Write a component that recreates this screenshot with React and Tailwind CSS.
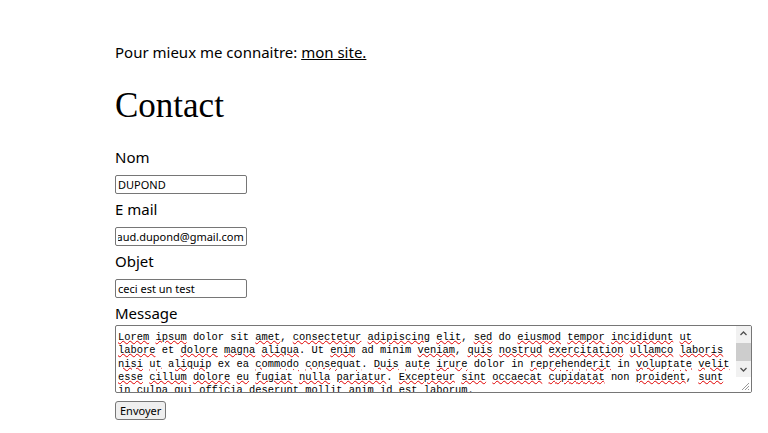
import { useEffect, useRef } from 'react';

const lorem =
  "Lorem ipsum dolor sit amet, consectetur adipiscing elit, sed do eiusmod tempor incididunt ut labore et dolore magna aliqua. Ut enim ad minim veniam, quis nostrud exercitation ullamco laboris nisi ut aliquip ex ea commodo consequat. Duis aute irure dolor in reprehenderit in voluptate velit esse cillum dolore eu fugiat nulla pariatur. Excepteur sint occaecat cupidatat non proident, sunt in culpa qui officia deserunt mollit anim id est laborum.";

// mots soulignés par le correcteur orthographique
const fautes = new Set(
  "Lorem ipsum amet consectetur adipiscing elit sed eiusmod tempor incididunt ut labore dolore magna aliqua enim veniam quis nostrud exercitation ullamco laboris nisi aliquip commodo consequat Duis aute irure reprehenderit voluptate velit esse cillum eu fugiat nulla pariatur Excepteur sint occaecat cupidatat proident sunt culpa qui officia deserunt mollit anim laborum".split(" ")
);

const inputCls =
  "block w-[132px] h-[19px] border border-[#767676] rounded-[2px] px-[2px] text-[11px] text-black bg-white outline-none";

const labelCls = "block text-[15px] leading-[22px] mt-[4px] mb-[7px]";

const Message = () => {
  const words = lorem.split(" ");
  return (
    <div className="flex w-[637px] h-[68px] border border-[#767676] rounded-[2px] bg-white overflow-hidden">
      <div
        role="textbox"
        aria-multiline="true"
        contentEditable
        suppressContentEditableWarning
        className="flex-1 pl-[2px] pr-[4px] pt-[5px] text-[10.4px] leading-[13.25px] font-['Liberation_Mono',monospace] text-black outline-none overflow-hidden whitespace-pre-wrap"
      >
        {words.map((w, i) => {
          const clean = w.replace(/[.,]/g, '');
          const punct = w.slice(clean.length);
          return (
            <span key={i}>
              {fautes.has(clean) ? (
                <span className="underline decoration-wavy decoration-[#e00000] decoration-1 underline-offset-[0px]">{clean}</span>
              ) : clean}
              {punct}
              {i < words.length - 1 ? ' ' : ''}
            </span>
          );
        })}
      </div>

      {/* barre de défilement */}
      <div className="w-[15px] flex flex-col">
        <div className="flex-1 bg-[#f1f1f1] flex flex-col items-center">
          <svg width="15" height="15" viewBox="0 0 15 15">
            <path d="M4.5 9 L7.5 6 L10.5 9" fill="none" stroke="#505050" strokeWidth="1.3" />
          </svg>
          <div className="w-[15px] h-[18px] bg-[#cdcdcd] mt-[2px]" />
          <div className="flex-1" />
          <svg width="15" height="15" viewBox="0 0 15 15">
            <path d="M4.5 6 L7.5 9 L10.5 6" fill="none" stroke="#505050" strokeWidth="1.3" />
          </svg>
        </div>
        <svg width="15" height="15" viewBox="0 0 15 15" className="bg-white">
          <path d="M13 6 L6 13 M13 9 L9 13 M13 12 L12 13" stroke="#999" strokeWidth="1" />
        </svg>
      </div>
    </div>
  );
};

export default function App() {
  const mailRef = useRef(null);

  useEffect(() => {
    // le champ mail est défilé jusqu'à la fin
    if (mailRef.current) mailRef.current.scrollLeft = 1000;
  }, []);

  return (
    <div className="min-h-[433px] bg-white text-black pl-[115px] pt-[42px] font-['Noto_Sans',sans-serif]">
      <p className="text-[15px] leading-[20px]">
        Pour mieux me connaitre: <a href="#" className="underline">mon site.</a>
      </p>

      <h1 className="mt-[24px] text-[35px] leading-[40px] font-['Liberation_Serif',serif]">Contact</h1>

      <form className="mt-[20px]" onSubmit={e => e.preventDefault()}>
        <label className="block text-[15px] leading-[22px] mb-[7px]">Nom</label>
        <input className={inputCls} defaultValue="DUPOND" />

        <label className={labelCls}>E mail</label>
        <input ref={mailRef} className={inputCls} defaultValue="arnaud.dupond@gmail.com" />

        <label className={labelCls}>Objet</label>
        <input className={inputCls} defaultValue="ceci est un test" />

        <label className="block text-[15px] leading-[22px] mt-[4px] mb-[1px]">Message</label>
        <Message />

        <button className="mt-[8px] h-[19px] px-[4px] text-[11px] leading-[17px] bg-[#efefef] border border-[#767676] rounded-[3px]">
          Envoyer
        </button>
      </form>
    </div>
  );
}
